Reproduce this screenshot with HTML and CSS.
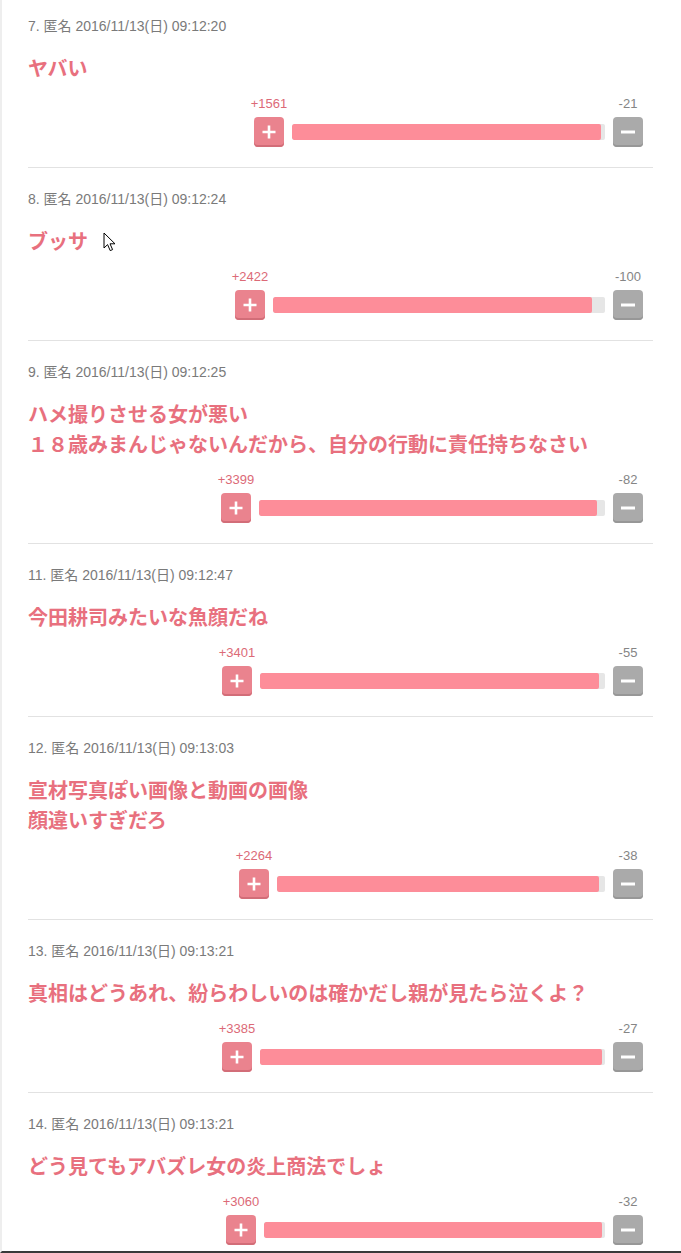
FILE: index.html
```html
<!DOCTYPE html>
<html lang="ja">
<head>
    <meta charset="UTF-8">
    <meta name="viewport" content="width=device-width, initial-scale=1.0">
    <title>コメント</title>
    <link rel="stylesheet" href="styles.css">
</head>
<body>
    <div class="page">
        <ul class="comments">
            <li class="comment">
                <div class="comment-meta">7. 匿名 2016/11/13(日) 09:12:20</div>
                <p class="comment-body">ヤバい</p>
                <div class="vote" style="width: 389px">
                    <div class="vote-side">
                        <span class="count count-plus">+1561</span>
                        <button class="btn btn-plus" aria-label="plus">
                            <svg width="14" height="14" viewBox="0 0 14 14"><path d="M7 0.5V13.5M0.5 7H13.5" stroke="#fff" stroke-width="2.6"/></svg>
                        </button>
                    </div>
                    <div class="bar"><div class="bar-fill" style="width: 98.7%"></div></div>
                    <div class="vote-side">
                        <span class="count count-minus">-21</span>
                        <button class="btn btn-minus" aria-label="minus">
                            <svg width="16" height="14" viewBox="0 0 16 14"><path d="M1 7H15" stroke="#fff" stroke-width="3"/></svg>
                        </button>
                    </div>
                </div>
            </li>

            <li class="comment">
                <div class="comment-meta">8. 匿名 2016/11/13(日) 09:12:24</div>
                <p class="comment-body">ブッサ</p>
                <div class="vote" style="width: 408px">
                    <div class="vote-side">
                        <span class="count count-plus">+2422</span>
                        <button class="btn btn-plus" aria-label="plus">
                            <svg width="14" height="14" viewBox="0 0 14 14"><path d="M7 0.5V13.5M0.5 7H13.5" stroke="#fff" stroke-width="2.6"/></svg>
                        </button>
                    </div>
                    <div class="bar"><div class="bar-fill" style="width: 96.0%"></div></div>
                    <div class="vote-side">
                        <span class="count count-minus">-100</span>
                        <button class="btn btn-minus" aria-label="minus">
                            <svg width="16" height="14" viewBox="0 0 16 14"><path d="M1 7H15" stroke="#fff" stroke-width="3"/></svg>
                        </button>
                    </div>
                </div>
                <!-- mouse pointer caught in the capture -->
                <svg class="cursor" width="13" height="20" viewBox="0 0 13 20">
                    <path d="M1 1V16L4.6 12.6L7.2 18.6L9.6 17.6L7 11.8H12Z" fill="#fff" stroke="#000" stroke-width="1" stroke-linejoin="round"/>
                </svg>
            </li>

            <li class="comment">
                <div class="comment-meta">9. 匿名 2016/11/13(日) 09:12:25</div>
                <p class="comment-body">ハメ撮りさせる女が悪い<br>１８歳みまんじゃないんだから、自分の行動に責任持ちなさい</p>
                <div class="vote" style="width: 422px">
                    <div class="vote-side">
                        <span class="count count-plus">+3399</span>
                        <button class="btn btn-plus" aria-label="plus">
                            <svg width="14" height="14" viewBox="0 0 14 14"><path d="M7 0.5V13.5M0.5 7H13.5" stroke="#fff" stroke-width="2.6"/></svg>
                        </button>
                    </div>
                    <div class="bar"><div class="bar-fill" style="width: 97.6%"></div></div>
                    <div class="vote-side">
                        <span class="count count-minus">-82</span>
                        <button class="btn btn-minus" aria-label="minus">
                            <svg width="16" height="14" viewBox="0 0 16 14"><path d="M1 7H15" stroke="#fff" stroke-width="3"/></svg>
                        </button>
                    </div>
                </div>
            </li>

            <li class="comment">
                <div class="comment-meta">11. 匿名 2016/11/13(日) 09:12:47</div>
                <p class="comment-body">今田耕司みたいな魚顔だね</p>
                <div class="vote" style="width: 421px">
                    <div class="vote-side">
                        <span class="count count-plus">+3401</span>
                        <button class="btn btn-plus" aria-label="plus">
                            <svg width="14" height="14" viewBox="0 0 14 14"><path d="M7 0.5V13.5M0.5 7H13.5" stroke="#fff" stroke-width="2.6"/></svg>
                        </button>
                    </div>
                    <div class="bar"><div class="bar-fill" style="width: 98.4%"></div></div>
                    <div class="vote-side">
                        <span class="count count-minus">-55</span>
                        <button class="btn btn-minus" aria-label="minus">
                            <svg width="16" height="14" viewBox="0 0 16 14"><path d="M1 7H15" stroke="#fff" stroke-width="3"/></svg>
                        </button>
                    </div>
                </div>
            </li>

            <li class="comment">
                <div class="comment-meta">12. 匿名 2016/11/13(日) 09:13:03</div>
                <p class="comment-body">宣材写真ぽい画像と動画の画像<br>顔違いすぎだろ</p>
                <div class="vote" style="width: 404px">
                    <div class="vote-side">
                        <span class="count count-plus">+2264</span>
                        <button class="btn btn-plus" aria-label="plus">
                            <svg width="14" height="14" viewBox="0 0 14 14"><path d="M7 0.5V13.5M0.5 7H13.5" stroke="#fff" stroke-width="2.6"/></svg>
                        </button>
                    </div>
                    <div class="bar"><div class="bar-fill" style="width: 98.3%"></div></div>
                    <div class="vote-side">
                        <span class="count count-minus">-38</span>
                        <button class="btn btn-minus" aria-label="minus">
                            <svg width="16" height="14" viewBox="0 0 16 14"><path d="M1 7H15" stroke="#fff" stroke-width="3"/></svg>
                        </button>
                    </div>
                </div>
            </li>

            <li class="comment">
                <div class="comment-meta">13. 匿名 2016/11/13(日) 09:13:21</div>
                <p class="comment-body">真相はどうあれ、紛らわしいのは確かだし親が見たら泣くよ？</p>
                <div class="vote" style="width: 421px">
                    <div class="vote-side">
                        <span class="count count-plus">+3385</span>
                        <button class="btn btn-plus" aria-label="plus">
                            <svg width="14" height="14" viewBox="0 0 14 14"><path d="M7 0.5V13.5M0.5 7H13.5" stroke="#fff" stroke-width="2.6"/></svg>
                        </button>
                    </div>
                    <div class="bar"><div class="bar-fill" style="width: 99.2%"></div></div>
                    <div class="vote-side">
                        <span class="count count-minus">-27</span>
                        <button class="btn btn-minus" aria-label="minus">
                            <svg width="16" height="14" viewBox="0 0 16 14"><path d="M1 7H15" stroke="#fff" stroke-width="3"/></svg>
                        </button>
                    </div>
                </div>
            </li>

            <li class="comment">
                <div class="comment-meta">14. 匿名 2016/11/13(日) 09:13:21</div>
                <p class="comment-body">どう見てもアバズレ女の炎上商法でしょ</p>
                <div class="vote" style="width: 417px">
                    <div class="vote-side">
                        <span class="count count-plus">+3060</span>
                        <button class="btn btn-plus" aria-label="plus">
                            <svg width="14" height="14" viewBox="0 0 14 14"><path d="M7 0.5V13.5M0.5 7H13.5" stroke="#fff" stroke-width="2.6"/></svg>
                        </button>
                    </div>
                    <div class="bar"><div class="bar-fill" style="width: 99.0%"></div></div>
                    <div class="vote-side">
                        <span class="count count-minus">-32</span>
                        <button class="btn btn-minus" aria-label="minus">
                            <svg width="16" height="14" viewBox="0 0 16 14"><path d="M1 7H15" stroke="#fff" stroke-width="3"/></svg>
                        </button>
                    </div>
                </div>
            </li>
        </ul>
    </div>
</body>
</html>
```

FILE: styles.css
```css
/* General Styles */
html, body {
    margin: 0;
    height: 100%;
    background-color: #fff;
}

body {
    font-family: "Liberation Sans", "Noto Sans CJK JP", sans-serif;
    overflow: hidden;
}

.page {
    height: 1253px;
    box-sizing: border-box;
    border-left: 2px solid #eeeeee; /* faint window edge */
    border-bottom: 2px solid #3a3a3a;
    overflow: hidden;
}

/* Comment list */
.comments {
    list-style: none;
    margin: 0;
    padding: 0 28px 0 26px;
}

.comment {
    position: relative;
    display: flex;
    flex-direction: column;
    padding: 22px 0 20px;
    border-bottom: 1px solid #e2e2e2;
}

.comment:first-child {
    padding-top: 17px;
}

.comment-meta {
    font-size: 14px;
    line-height: 18px;
    color: #7a7a7a;
}

.comment-body {
    margin: 18px 0 0;
    font-family: "Noto Sans CJK JP", sans-serif;
    font-size: 20px;
    font-weight: bold;
    line-height: 30px;
    color: #e8707e;
}

/* Vote widget */
.vote {
    display: flex;
    align-items: flex-end;
    gap: 8px;
    margin: 13px 10px 0 auto;
}

.vote-side {
    width: 30px;
    display: flex;
    flex-direction: column;
    align-items: center; /* count overflows evenly over the button */
}

.count {
    font-size: 13px;
    line-height: 16px;
    white-space: nowrap;
    margin-bottom: 5px;
}

.count-plus {
    color: #dc6a77;
}

.count-minus {
    color: #858585;
}

.btn {
    width: 30px;
    height: 30px;
    padding: 0;
    border: none;
    border-radius: 4px;
    display: flex;
    align-items: center;
    justify-content: center;
    cursor: pointer;
}

.btn-plus {
    background-color: #ea838e;
    box-shadow: inset 0 -2px 0 #d26d78;
}

.btn-minus {
    background-color: #aaaaaa;
    box-shadow: inset 0 -2px 0 #979797;
}

.bar {
    flex: 1;
    height: 16px;
    margin-bottom: 7px;
    background-color: #e6e6e6;
    border-radius: 2px;
    overflow: hidden;
}

.bar-fill {
    height: 100%;
    background-color: #fd8d99;
    border-radius: 2px;
}

/* stray pointer in the capture */
.cursor {
    position: absolute;
    left: 75px;
    top: 64px;
}
```
